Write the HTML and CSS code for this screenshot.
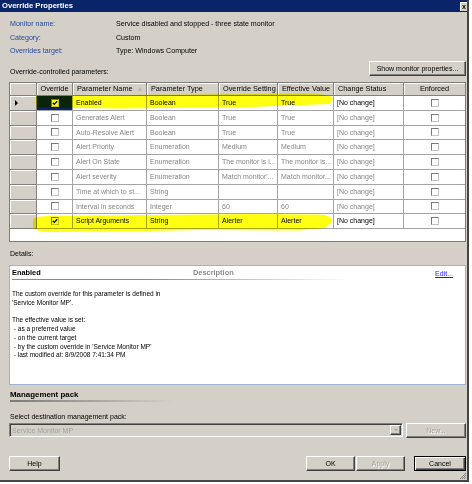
FILE: index.html
```html
<!DOCTYPE html>
<html lang="en">
<head>
    <meta charset="UTF-8">
    <title>Override Properties</title>
    <link rel="stylesheet" href="styles.css">
</head>
<body>
    <div class="dialog">
        <div class="titlebar">
            <span>Override Properties</span>
            <span class="close">x</span>
        </div>
        <div class="content">
            <div class="info">
                <div class="label">Monitor name:</div>
                <div class="value">Service disabled and stopped - three state monitor</div>
                <div class="label">Category:</div>
                <div class="value">Custom</div>
                <div class="label">Overrides target:</div>
                <div class="value">Type: Windows Computer</div>
            </div>

            <div class="params-head">
                <span>Override-controlled parameters:</span>
                <button class="btn btn-show">Show monitor properties...</button>
            </div>

            <div class="grid">
                <div class="row head">
                    <div class="cell rh"></div>
                    <div class="cell center">Override</div>
                    <div class="cell sort">Parameter Name <span class="arrow"></span></div>
                    <div class="cell">Parameter Type</div>
                    <div class="cell">Override Setting</div>
                    <div class="cell">Effective Value</div>
                    <div class="cell">Change Status</div>
                    <div class="cell center">Enforced</div>
                </div>
                <div class="row on">
                    <div class="cell rh"><span class="pointer"></span></div>
                    <div class="cell center sel"><span class="cb checked"><svg viewBox="0 0 6 6"><path d="M0.8 2.8 L2.3 4.4 L5.2 1.2"/></svg></span></div>
                    <div class="cell">Enabled</div>
                    <div class="cell">Boolean</div>
                    <div class="cell">True</div>
                    <div class="cell">True</div>
                    <div class="cell">[No change]</div>
                    <div class="cell center"><span class="cb"></span></div>
                </div>
                <div class="row">
                    <div class="cell rh"></div>
                    <div class="cell center"><span class="cb"></span></div>
                    <div class="cell">Generates Alert</div>
                    <div class="cell">Boolean</div>
                    <div class="cell">True</div>
                    <div class="cell">True</div>
                    <div class="cell">[No change]</div>
                    <div class="cell center"><span class="cb"></span></div>
                </div>
                <div class="row">
                    <div class="cell rh"></div>
                    <div class="cell center"><span class="cb"></span></div>
                    <div class="cell">Auto-Resolve Alert</div>
                    <div class="cell">Boolean</div>
                    <div class="cell">True</div>
                    <div class="cell">True</div>
                    <div class="cell">[No change]</div>
                    <div class="cell center"><span class="cb"></span></div>
                </div>
                <div class="row">
                    <div class="cell rh"></div>
                    <div class="cell center"><span class="cb"></span></div>
                    <div class="cell">Alert Priority</div>
                    <div class="cell">Enumeration</div>
                    <div class="cell">Medium</div>
                    <div class="cell">Medium</div>
                    <div class="cell">[No change]</div>
                    <div class="cell center"><span class="cb"></span></div>
                </div>
                <div class="row">
                    <div class="cell rh"></div>
                    <div class="cell center"><span class="cb"></span></div>
                    <div class="cell">Alert On State</div>
                    <div class="cell">Enumeration</div>
                    <div class="cell">The monitor is i...</div>
                    <div class="cell">The monitor is...</div>
                    <div class="cell">[No change]</div>
                    <div class="cell center"><span class="cb"></span></div>
                </div>
                <div class="row">
                    <div class="cell rh"></div>
                    <div class="cell center"><span class="cb"></span></div>
                    <div class="cell">Alert severity</div>
                    <div class="cell">Enumeration</div>
                    <div class="cell">Match monitor'...</div>
                    <div class="cell">Match monitor...</div>
                    <div class="cell">[No change]</div>
                    <div class="cell center"><span class="cb"></span></div>
                </div>
                <div class="row">
                    <div class="cell rh"></div>
                    <div class="cell center"><span class="cb"></span></div>
                    <div class="cell">Time at which to st...</div>
                    <div class="cell">String</div>
                    <div class="cell"></div>
                    <div class="cell"></div>
                    <div class="cell">[No change]</div>
                    <div class="cell center"><span class="cb"></span></div>
                </div>
                <div class="row">
                    <div class="cell rh"></div>
                    <div class="cell center"><span class="cb"></span></div>
                    <div class="cell">Interval in seconds</div>
                    <div class="cell">Integer</div>
                    <div class="cell">60</div>
                    <div class="cell">60</div>
                    <div class="cell">[No change]</div>
                    <div class="cell center"><span class="cb"></span></div>
                </div>
                <div class="row on">
                    <div class="cell rh"></div>
                    <div class="cell center"><span class="cb checked"><svg viewBox="0 0 6 6"><path d="M0.8 2.8 L2.3 4.4 L5.2 1.2"/></svg></span></div>
                    <div class="cell">Script Arguments</div>
                    <div class="cell">String</div>
                    <div class="cell">Alerter</div>
                    <div class="cell">Alerter</div>
                    <div class="cell">[No change]</div>
                    <div class="cell center"><span class="cb"></span></div>
                </div>
                <div class="grid-empty"></div>

                <!-- highlighter marks drawn over the grid -->
                <svg class="marker" width="455" height="170" viewBox="10 83 455 170">
                    <path d="M36 96 L120 95 L250 94 L302 93.5 Q331 94 333 98 L330 104 L290 105.5 L250 107 L120 108.5 L36 107.5 Z"/>
                    <path d="M33 219 Q36 216 50 216 L150 215 L250 214 L320 214.5 Q334 216 332 222 L325 228 L300 230.5 L200 230 L120 231.5 L50 232 Q34 232 33 226 Z"/>
                </svg>
            </div>

            <div class="section-label">Details:</div>
            <div class="details">
                <div class="dhead">
                    <div class="dhead-left">
                        <div class="dtitle">
                            <span class="dname">Enabled</span>
                            <span class="ddesc">Description</span>
                        </div>
                        <div class="rule"></div>
                    </div>
                    <a class="edit" href="#">Edit...</a>
                </div>
                <div class="dtext">The custom override for this parameter is defined in
'Service Monitor MP'.

The effective value is set:
 - as a preferred value
 - on the current target
 - by the custom override in 'Service Monitor MP'
 - last modified at: 8/9/2008 7:41:34 PM</div>
            </div>

            <div class="mp-title">Management pack</div>
            <div class="mp-rule"></div>
            <div class="section-label select-label">Select destination management pack:</div>
            <div class="mp-row">
                <div class="combo">
                    <span>Service Monitor MP</span>
                    <span class="combo-btn"><span class="down"></span></span>
                </div>
                <button class="btn btn-new" disabled>New...</button>
            </div>

            <div class="footer">
                <button class="btn btn-help">Help</button>
                <button class="btn btn-ok">OK</button>
                <button class="btn btn-apply" disabled>Apply</button>
                <button class="btn btn-cancel">Cancel</button>
            </div>
        </div>
        <svg class="grip" width="6" height="6" viewBox="0 0 6 6">
            <path d="M6 0 L0 6 M6 2 L2 6 M6 4 L4 6"/>
        </svg>
    </div>
</body>
</html>
```

FILE: styles.css
```css
body {
    margin: 0;
    background: #fff;
    font-family: "Liberation Sans", Arial, sans-serif;
    font-size: 7px;
    color: #000;
}
.dialog {
    position: relative;
    width: 467px;
    height: 480px;
    background: #d4d0c8;
    border-right: 2px solid #454545;
    border-bottom: 2px solid #454545;
}
.titlebar {
    display: flex;
    justify-content: space-between;
    height: 12px;
    line-height: 12px;
    padding-left: 2px;
    background: #0a246a;
    color: #fff;
    font-weight: bold;
    font-size: 7.6px;
}
.close {
    width: 5px;
    height: 8px;
    margin-top: 2px;
    overflow: hidden;
    background: #d4d0c8;
    border-top: 1px solid #fff;
    border-left: 1px solid #fff;
    color: #000;
    font-size: 7px;
    line-height: 8px;
    padding-left: 1px;
}
.content {
    padding: 0 1px 0 9px;
}
.info {
    display: grid;
    grid-template-columns: 106px 1fr;
    margin-top: 6px;
    padding-left: 1px;
    font-size: 7.1px;
}
.info div {
    line-height: 13.5px;
}
.label {
    color: #24479b;
}
.params-head {
    display: flex;
    justify-content: space-between;
    align-items: flex-end;
    height: 15px;
    margin-top: 2.5px;
}
.params-head span {
    padding-left: 1px;
    line-height: 9px;
}
.btn {
    font: inherit;
    height: 15px;
    padding: 0;
    background: #d4d0c8;
    color: #000;
    border: 1px solid;
    border-color: #fff #404040 #404040 #fff;
    box-shadow: inset -1px -1px 0 #808080;
}
.btn:disabled {
    color: #a0a0a0;
    text-shadow: 1px 1px 0 #fff;
}
.btn-show {
    width: 97px;
}

/* grid */
.grid {
    position: relative;
    margin-top: 6px;
    border: 1px solid #7c7c7c;
    background: #fff;
}
.row {
    display: grid;
    grid-template-columns: 27px 36px 74px 72px 59px 56px 70px 61px;
    height: 14.8px;
    color: #868686;
}
.row.on {
    color: #000;
}
.cell {
    box-sizing: border-box;
    padding-left: 3px;
    border-right: 1px solid #a4a4a4;
    border-bottom: 1px solid #a4a4a4;
    line-height: 13.8px;
    white-space: nowrap;
    overflow: hidden;
}
.cell:last-child {
    border-right: none;
}
.cell.center {
    display: flex;
    align-items: center;
    justify-content: center;
    padding-left: 0;
}
.row.head {
    height: 13px;
    color: #000;
    font-size: 7.3px;
}
.row.head .cell {
    line-height: 12px;
    background: #d4d0c8;
    border-color: #808080;
    box-shadow: inset 1px 1px 0 #fff;
    padding-left: 4px;
}
.row.head .cell.center {
    padding-left: 0;
}
.cell.rh {
    position: relative;
    background: #d4d0c8;
    border-color: #808080;
    box-shadow: inset 1px 1px 0 #fff;
}
.sort {
    position: relative;
}
.arrow {
    position: absolute;
    right: 4px;
    top: 4px;
    border-left: 2.5px solid transparent;
    border-right: 2.5px solid transparent;
    border-bottom: 4px solid #b8b4ac;
}
.pointer {
    position: absolute;
    left: 5px;
    top: 4px;
    border-top: 3px solid transparent;
    border-bottom: 3px solid transparent;
    border-left: 3.5px solid #000;
}
.sel {
    background: #0a246a;
}
.cb {
    display: flex;
    align-items: center;
    justify-content: center;
    box-sizing: border-box;
    width: 8px;
    height: 8px;
    background: #fff;
    border: 1px solid;
    border-color: #7a7a7a #c4c4c4 #c4c4c4 #7a7a7a;
}
.cb svg {
    width: 6px;
    height: 6px;
}
.cb path {
    fill: none;
    stroke: #000;
    stroke-width: 1.3;
}
.grid-empty {
    height: 12px;
}
.marker {
    position: absolute;
    left: 0;
    top: 0;
    mix-blend-mode: multiply;
    pointer-events: none;
}
.marker path {
    fill: #ffff10;
}

/* details */
.section-label {
    margin-top: 7.3px;
    padding-left: 1px;
    line-height: 9px;
}
.details {
    box-sizing: border-box;
    height: 120px;
    margin-top: 6.5px;
    padding: 1.8px 12px 0 2px;
    background: #fff;
    border: 1px solid #9db3d3;
}
.dhead {
    display: flex;
}
.dhead-left {
    width: 338px;
}
.dtitle {
    display: flex;
    line-height: 9px;
    font-weight: bold;
    font-size: 7.4px;
}
.dname {
    width: 181px;
}
.ddesc {
    color: #8c8c8c;
}
.rule {
    height: 1px;
    margin-top: 2px;
    background: linear-gradient(to right, #8a8a8a, #8a8a8a 40%, #fff);
}
.edit {
    margin-left: auto;
    margin-top: 1.7px;
    line-height: 9px;
    color: #1a1aff;
    text-decoration: underline;
}
.dtext {
    margin-top: 10px;
    font-size: 6.5px;
    line-height: 8.8px;
    white-space: pre;
}

/* management pack */
.mp-title {
    margin-top: 5.5px;
    padding-left: 1px;
    line-height: 9px;
    font-weight: bold;
    font-size: 7.9px;
}
.mp-rule {
    width: 164px;
    height: 2px;
    margin: 1px 0 0 1px;
    background: linear-gradient(to right, #7a7a7a, rgba(122, 122, 122, 0));
}
.select-label {
    margin-top: 9.7px;
}
.mp-row {
    display: flex;
    align-items: center;
    gap: 3px;
    height: 15px;
    margin-top: 1.8px;
}
.combo {
    display: flex;
    align-items: center;
    justify-content: space-between;
    box-sizing: border-box;
    width: 394px;
    height: 14px;
    padding: 0 1px 0 2px;
    background: #d4d0c8;
    color: #a0a0a0;
    border: 1px solid;
    border-color: #808080 #fff #fff #808080;
    box-shadow: inset 1px 1px 0 #404040;
}
.combo-btn {
    display: flex;
    align-items: center;
    justify-content: center;
    box-sizing: border-box;
    width: 11px;
    height: 10px;
    border: 1px solid;
    border-color: #fff #404040 #404040 #fff;
    box-shadow: inset -1px -1px 0 #808080;
}
.down {
    border-left: 2px solid transparent;
    border-right: 2px solid transparent;
    border-top: 2px solid #a0a0a0;
}
.btn-new {
    width: 60px;
}
.footer {
    display: flex;
    margin-top: 18px;
}
.btn-help {
    width: 51px;
}
.btn-ok {
    width: 49px;
    margin-left: auto;
}
.btn-apply {
    width: 49px;
    margin-left: 1px;
}
.btn-cancel {
    width: 52px;
    margin-left: 9px;
    border: 1px solid #000;
    box-shadow: inset 1px 1px 0 #fff, inset -1px -1px 0 #404040, inset -2px -2px 0 #808080;
}
.grip {
    position: absolute;
    right: 1px;
    bottom: 1px;
}
.grip path {
    stroke: #808080;
    stroke-width: 1;
}
```
